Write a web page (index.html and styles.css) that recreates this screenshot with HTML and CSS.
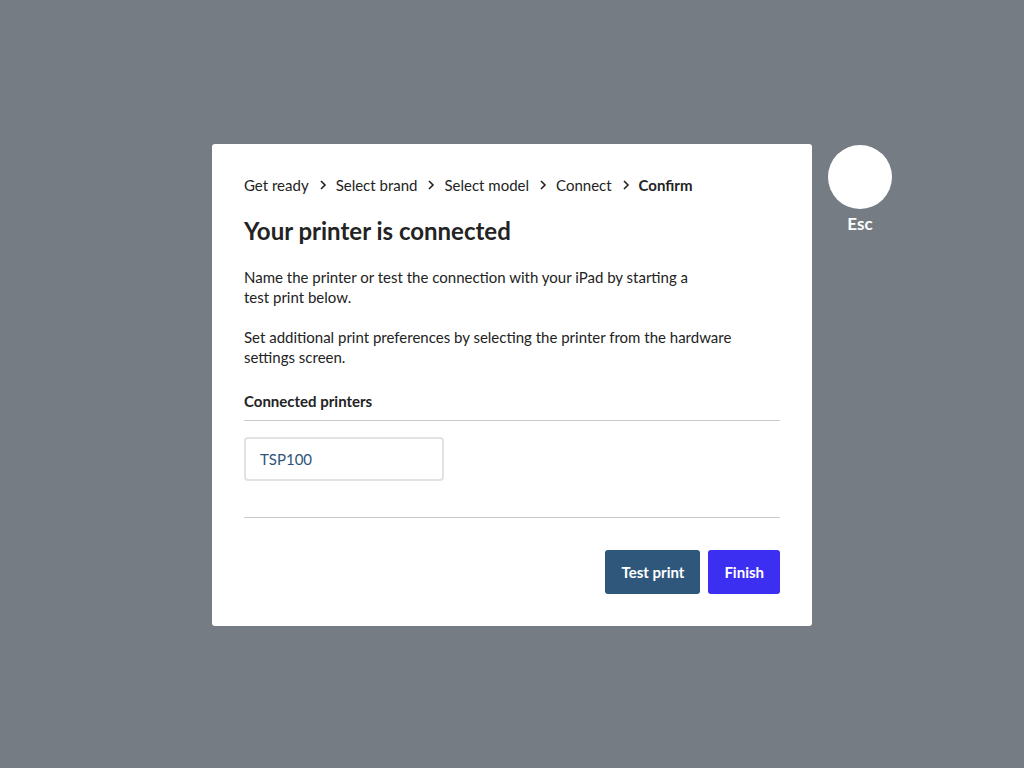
FILE: index.html
```html
<!DOCTYPE html>
<html lang="en">
<head>
<meta charset="utf-8">
<title>Printer connected</title>
<link rel="stylesheet" href="styles.css">
</head>
<body>
<div class="stage">
  <div class="spacer"></div>
  <div class="modal">
    <nav class="crumbs">
      <span class="crumb">Get ready</span>
      <svg class="chev" viewBox="0 0 8 12" width="8" height="12"><path d="M2 2l4 4-4 4" fill="none" stroke="#232323" stroke-width="1.6"/></svg>
      <span class="crumb">Select brand</span>
      <svg class="chev" viewBox="0 0 8 12" width="8" height="12"><path d="M2 2l4 4-4 4" fill="none" stroke="#232323" stroke-width="1.6"/></svg>
      <span class="crumb">Select model</span>
      <svg class="chev" viewBox="0 0 8 12" width="8" height="12"><path d="M2 2l4 4-4 4" fill="none" stroke="#232323" stroke-width="1.6"/></svg>
      <span class="crumb">Connect</span>
      <svg class="chev" viewBox="0 0 8 12" width="8" height="12"><path d="M2 2l4 4-4 4" fill="none" stroke="#232323" stroke-width="1.6"/></svg>
      <span class="crumb current">Confirm</span>
    </nav>
    <h1 class="title">Your printer is connected</h1>
    <p class="text narrow">Name the printer or test the connection with your iPad by starting a test print below.</p>
    <p class="text">Set additional print preferences by selecting the printer from the hardware settings screen.</p>
    <h2 class="section">Connected printers</h2>
    <div class="printers">
      <div class="printer-box">TSP100</div>
    </div>
    <div class="actions">
      <button class="btn btn-secondary">Test print</button>
      <button class="btn btn-primary">Finish</button>
    </div>
  </div>
  <div class="esc">
    <div class="esc-circle"></div>
    <div class="esc-label">Esc</div>
  </div>
</div>
</body>
</html>
```
FILE: styles.css
```css
* { box-sizing: border-box; }
html, body { margin: 0; height: 100%; }
body {
  background: #767c84;
  font-family: Lato, "Noto Sans", sans-serif;
  color: #232323;
}
.stage {
  height: 768px;
  display: grid;
  grid-template-columns: 1fr 600px 1fr;
  align-items: start;
  padding-top: 144px;
}
.modal {
  background: #fff;
  border-radius: 3px;
  padding: 32px 32px 32px;
  height: 482px;
}
.crumbs {
  display: flex;
  align-items: center;
  font-size: 15px;
  line-height: 20px;
  height: 20px;
  margin-top: -1px;
}
.chev { margin: 0 9px 0 10px; }
.crumb.current { font-weight: 700; }
.title {
  font-size: 24px;
  font-weight: 700;
  line-height: 30px;
  margin: 21px 0 0;
}
.text {
  font-size: 15px;
  line-height: 20px;
  margin: 21px 0 0;
}
.text.narrow { max-width: 460px; }
.text + .text { margin-top: 20px; }
.section {
  font-size: 15px;
  font-weight: 700;
  line-height: 20px;
  margin: 24px 0 0;
  padding-bottom: 9px;
  border-bottom: 1px solid #c8c8c8;
}
.printers {
  padding: 16px 0 36px;
  border-bottom: 1px solid #c8c8c8;
}
.printer-box {
  width: 200px;
  height: 44px;
  border: 2px solid #e2e2e2;
  border-radius: 4px;
  padding: 0 14px;
  display: flex;
  align-items: center;
  font-size: 15px;
  color: #2f5479;
}
.actions {
  display: flex;
  justify-content: flex-end;
  gap: 8px;
  margin-top: 32px;
}
.btn {
  height: 44px;
  border: none;
  border-radius: 3px;
  font-family: Lato, "Noto Sans", sans-serif;
  font-size: 15px;
  font-weight: 700;
  color: #fff;
  padding: 0 16px;
}
.btn-secondary { background: #2f577b; padding: 0 16px 0 17px; }
.btn-primary { background: #3d2ff2; }
.esc {
  display: flex;
  flex-direction: column;
  align-items: center;
  width: 64px;
  margin-left: 16px;
  margin-top: 1px;
}
.esc-circle {
  width: 64px;
  height: 64px;
  border-radius: 50%;
  background: #fff;
}
.esc-label {
  color: #fff;
  font-size: 17px;
  font-weight: 700;
  line-height: 20px;
  margin-top: 5px;
}
```
